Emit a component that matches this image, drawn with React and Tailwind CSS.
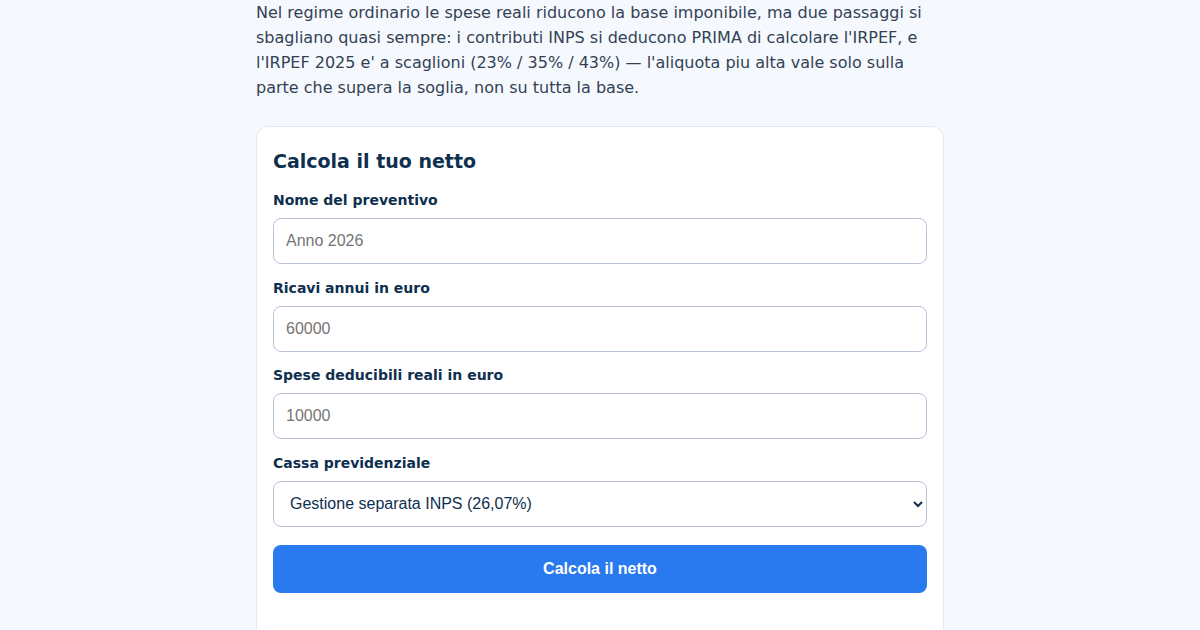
import React from 'react';

const labelCls = "block text-sm font-bold leading-5 text-[#0f2f4f] mb-2";
const inputCls =
  "block w-full h-[46px] rounded-lg border border-[#b8c3da] bg-white px-3 text-base text-[#0f2f4f] placeholder:text-[#757575] outline-none";

const Field = ({ label, first, children }) => (
  <div className={first ? "mt-[15px]" : "mt-[13.5px]"}>
    <label className={labelCls}>{label}</label>
    {children}
  </div>
);

export default function App() {
  return (
    <div className="min-h-[630px] bg-[#f5f9fd] font-['DejaVu_Sans',sans-serif]">
      <div className="mx-auto w-[688px]">
        <p className="text-base leading-[25px] text-[#334155]">
          Nel regime ordinario le spese reali riducono la base imponibile, ma due passaggi si
          sbagliano quasi sempre: i contributi INPS si deducono PRIMA di calcolare l'IRPEF, e
          l'IRPEF 2025 e' a scaglioni (23% / 35% / 43%) — l'aliquota piu alta vale solo sulla
          parte che supera la soglia, non su tutta la base.
        </p>

        <div className="mt-[26px] rounded-xl border border-[#e1e8f1] bg-white px-4 pt-5 pb-16">
          <h2 className="text-[19px] font-bold leading-7 text-[#0f2f4f]">Calcola il tuo netto</h2>

          <Field label="Nome del preventivo" first>
            <input
              className={inputCls}
              style={{ fontFamily: "'Liberation Sans', Arial, sans-serif" }}
              placeholder="Anno 2026"
            />
          </Field>

          <Field label="Ricavi annui in euro">
            <input
              className={inputCls}
              style={{ fontFamily: "'Liberation Sans', Arial, sans-serif" }}
              placeholder="60000"
            />
          </Field>

          <Field label="Spese deducibili reali in euro">
            <input
              className={inputCls}
              style={{ fontFamily: "'Liberation Sans', Arial, sans-serif" }}
              placeholder="10000"
            />
          </Field>

          <Field label="Cassa previdenziale">
            <select
              className="block w-full h-[46px] rounded-lg border border-[#b8c3da] bg-white px-3 text-base text-[#0f2f4f] outline-none font-['Liberation_Sans',Arial,sans-serif]"
              defaultValue="gs"
            >
              <option value="gs">Gestione separata INPS (26,07%)</option>
              <option value="art">Artigiani e commercianti INPS</option>
            </select>
          </Field>

          <button className="mt-[18px] block w-full h-12 rounded-lg bg-[#2979ef] text-base font-bold text-white font-['Liberation_Sans',Arial,sans-serif]">
            Calcola il netto
          </button>
        </div>
      </div>
    </div>
  );
}
